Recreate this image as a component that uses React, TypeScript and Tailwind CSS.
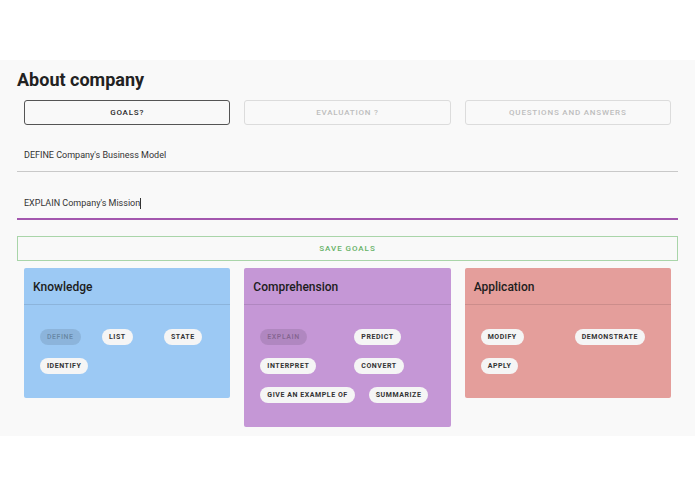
import React from 'react'

interface Chip {
  label: string
  disabled?: boolean
  last?: boolean
}

interface CardData {
  title: string
  bg: string
  slot: string
  chips: Chip[]
}

const cards: CardData[] = [
  {
    title: 'Knowledge',
    bg: 'bg-[#9cc9f4]',
    slot: 'min-w-[48px]',
    chips: [{ label: 'DEFINE', disabled: true }, { label: 'LIST' }, { label: 'STATE' }, { label: 'IDENTIFY' }]
  },
  {
    title: 'Comprehension',
    bg: 'bg-[#c597d6]',
    slot: 'min-w-[80px]',
    chips: [
      { label: 'EXPLAIN', disabled: true },
      { label: 'PREDICT' },
      { label: 'INTERPRET' },
      { label: 'CONVERT' },
      { label: 'GIVE AN EXAMPLE OF' },
      { label: 'SUMMARIZE', last: true }
    ]
  },
  {
    title: 'Application',
    bg: 'bg-[#e49e9b]',
    slot: 'min-w-[80px]',
    chips: [{ label: 'MODIFY' }, { label: 'DEMONSTRATE' }, { label: 'APPLY' }]
  }
]

const tabs = ['GOALS?', 'EVALUATION ?', 'QUESTIONS AND ANSWERS']

export default function App() {
  return (
    <div className="h-[494px] w-[695px] bg-white font-['Roboto',sans-serif] pt-[60px]">
      <div className="bg-[#f9f9f9] px-[17px] pt-[8px] pb-[9px]">
        <h1 className="text-[18px] leading-[24px] font-bold text-[#222]">About company</h1>

        {/* Tabs */}
        <div className="grid grid-cols-3 gap-[14px] px-[7px] mt-[8px]">
          {tabs.map((t, i) => (
            <button
              key={t}
              className={
                i === 0
                  ? 'h-[25px] rounded-[3px] border border-[#555] text-[8px] font-medium tracking-[0.1em] text-[#2a2a2a]'
                  : 'h-[25px] rounded-[3px] border border-[#dcdcdc] text-[8px] font-medium tracking-[0.1em] text-[#bdbdbd]'
              }
            >
              {t}
            </button>
          ))}
        </div>

        {/* Inputs */}
        <div className="border-b border-[#c9c9c9] pt-[24px] pb-[10px] px-[7px]">
          <div className="text-[9px] leading-[12px] text-[#333]">DEFINE Company's Business Model</div>
        </div>
        <div className="border-b-2 border-[#a357ae] pt-[25px] pb-[9px] px-[7px]">
          <div className="text-[9px] leading-[12px] text-[#333]">
            EXPLAIN Company's Mission<span className="inline-block w-px h-[11px] bg-[#333] align-middle" />
          </div>
        </div>

        <button className="mt-[16px] w-full h-[25px] border border-[#a9d5a9] text-[8px] font-medium tracking-[0.12em] text-[#66b267]">
          SAVE GOALS
        </button>

        {/* Cards */}
        <div className="grid grid-cols-3 gap-[14px] px-[7px] mt-[7px] items-start">
          {cards.map(card => (
            <div key={card.title} className={`${card.bg} rounded-[2px]`}>
              <div className="h-[37px] flex items-center px-[9px] pt-[2px] border-b border-black/10">
                <span className="text-[12px] font-medium text-[#1d1d1d]">{card.title}</span>
              </div>
              <div className="flex flex-wrap gap-x-[14px] gap-y-[13px] px-[16px] pt-[24px] pb-[24px]">
                {card.chips.map(c => (
                  <div key={c.label} className={c.last ? 'flex' : `${card.slot} flex`}>
                    <span
                      className={
                        c.disabled
                          ? 'inline-flex items-center h-[16px] px-[7px] rounded-full bg-black/10 text-[7px] leading-none font-bold tracking-[0.08em] text-black/25'
                          : 'inline-flex items-center h-[16px] px-[7px] rounded-full bg-[#f5f5f5] text-[7px] leading-none font-bold tracking-[0.08em] text-[#333]'
                      }
                    >
                      {c.label}
                    </span>
                  </div>
                ))}
              </div>
            </div>
          ))}
        </div>
      </div>
    </div>
  )
}
